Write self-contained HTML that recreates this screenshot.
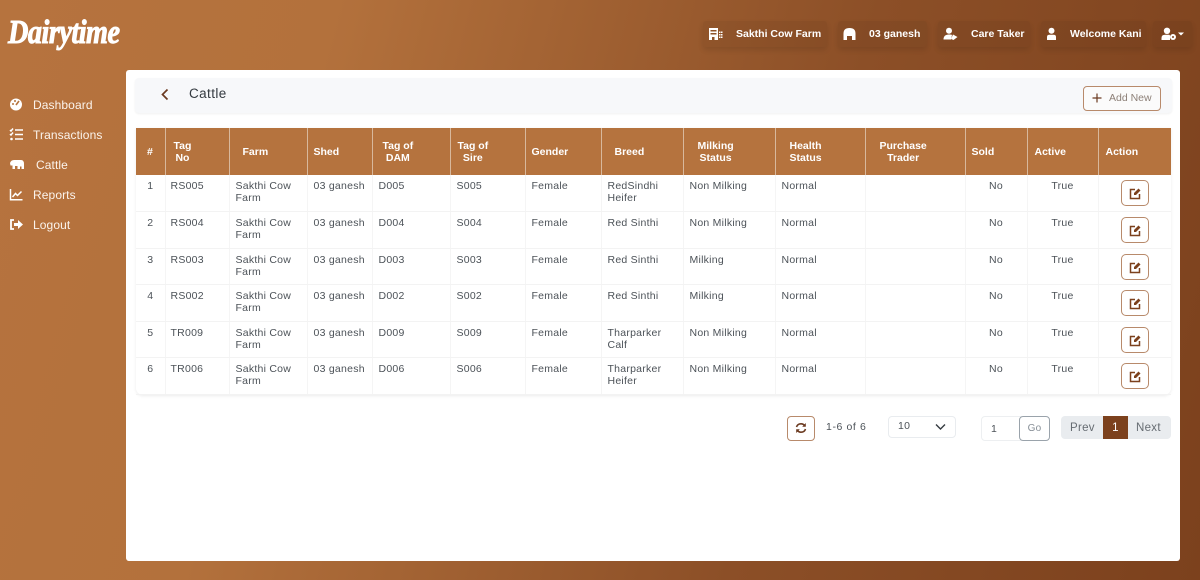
<!DOCTYPE html>
<html><head><meta charset="utf-8"><style>
*{box-sizing:border-box}
html,body{margin:0;padding:0}
body{width:1200px;height:580px;position:relative;overflow:hidden;font-family:"Liberation Sans",sans-serif;background:linear-gradient(105deg,#b6733e 0%,#b3713c 25%,#8c4f27 65%,#7c411d 100%);letter-spacing:.25px}
.abs,.nav,.top,.top-t{position:absolute}
.logo{position:absolute;left:8px;top:14px;font:italic bold 34px "Liberation Serif",serif;color:#fff;letter-spacing:-.6px;-webkit-text-stroke:1px #fff;transform:scaleX(.83);transform-origin:left center}
.nav{color:#fbf3ec;font-size:12px;line-height:16px;letter-spacing:.1px;left:33px;font-weight:400}
.nav-i{position:absolute;left:9px;width:15px;height:15px}
.top{top:21px;height:26px;background:#0000000d;box-shadow:0 3px 6px #0000001c;border-radius:3px}
.top-t{top:27px;color:#fff;font-size:10.5px;font-weight:bold;line-height:14px;letter-spacing:0;white-space:nowrap}
.top-i{position:absolute;top:27px;width:15px;height:14px}
.card{position:absolute;left:126px;top:70px;width:1054px;height:491px;background:#fff;border-radius:3px}
.head{position:absolute;left:135px;top:78px;width:1037px;height:35px;background:#f7f8fa;border-radius:4px;box-shadow:0 1px 2px #0000000f}
.title{position:absolute;left:189px;top:85px;font-size:13.5px;line-height:17px;color:#343a40;letter-spacing:.4px}
.add{position:absolute;left:1083px;top:86px;width:78px;height:25px;border:1px solid #b88a6b;border-radius:4px;background:#fbfbfb;color:#8d8078;font-size:10.5px;line-height:23px;padding-left:25px;letter-spacing:0;white-space:nowrap}
table{position:absolute;left:136px;top:128px;width:1035px;border-collapse:collapse;table-layout:fixed;font-size:10.5px;color:#4c5258;box-shadow:0 1px 3px #00000014;border-radius:0 0 7px 7px}
th{height:47px;background:#b5733e;color:#fff;font-weight:bold;text-align:left;padding:0;border-right:1.5px solid #d8b89c;line-height:12px;vertical-align:middle;font-size:10.5px;letter-spacing:0}
th:last-child,td:last-child{border-right:0}
th span{display:inline-block;text-align:center}
td{height:36.5px;padding:5px 0 0 6px;vertical-align:top;line-height:12px;border-right:1px solid #f5f5f5;border-bottom:1px solid #f3f3f3}
td.c{text-align:center;padding-left:0}
.ed{display:block;width:28px;height:26px;margin:0 0 0 16px;border:1px solid #b88a6b;border-radius:5px;position:relative;top:0;background:#fff}
.ed svg{position:absolute;left:7px;top:6px}
.pg{position:absolute;font-size:10.5px;color:#4c5258;line-height:14px}
</style></head><body>
<div class="logo">Dairytime</div>

<svg class="nav-i" style="top:97px" viewBox="0 0 15 15"><circle cx="7" cy="7.500" r="6" fill="#fff"/><path d="M7 8L10 4" stroke="#b5733e" stroke-width="1.600"/><circle cx="4" cy="7" r="1" fill="#b5733e"/><circle cx="6" cy="4" r="1" fill="#b5733e"/></svg>
<div class="nav" style="top:97px">Dashboard</div>
<svg class="nav-i" style="top:127px" viewBox="0 0 15 15"><path d="M6 3h8M6 7.500h8M6 12h8M1 3l1 1 2-2.500M1 7l1 1 2-2.500" stroke="#fff" stroke-width="1.500" fill="none"/><circle cx="2.500" cy="12" r="1.300" fill="#fff"/></svg>
<div class="nav" style="top:127px">Transactions</div>
<svg class="nav-i" style="top:157px;width:16px" viewBox="0 0 16 15"><path d="M1 6Q2 3 5 3H12Q15 3 15 7V12H12.500V9.500H11V12H8.500V9H6V12H3.500V8.500L1.500 8.500Z" fill="#fff"/></svg>
<div class="nav" style="top:157px;left:36px">Cattle</div>
<svg class="nav-i" style="top:187px" viewBox="0 0 15 15"><path d="M1.500 2V12.800H13.500" stroke="#fff" stroke-width="1.500" fill="none"/><path d="M3.500 10L6.500 6.500 8.500 8.500 12.500 4.500" stroke="#fff" stroke-width="1.500" fill="none"/></svg>
<div class="nav" style="top:187px">Reports</div>
<svg class="nav-i" style="top:217px" viewBox="0 0 15 15"><path d="M5 3H2V12H5" stroke="#fff" stroke-width="1.800" fill="none"/><path d="M5 6H9V3L14 7.500 9 12V9H5Z" fill="#fff"/></svg>
<div class="nav" style="top:217px">Logout</div>

<div class="top" style="left:703px;width:124px"></div>
<svg class="top-i" style="left:708px" viewBox="0 0 15 14"><path d="M1 1H10V13H6.500V10H4V13H1ZM2.500 3V4.500H8.500V3ZM2.500 6V7.500H8.500V6Z" fill="#fff" fill-rule="evenodd"/><path d="M11 4.500h1.500v1.500H11zM13 4.500h1.500v1.500H13zM11 7h1.500v1.500H11zM13 7h1.500v1.500H13zM11 9.500h1.500V11H11zM13 9.500h1.500V11H13z" fill="#fff"/></svg>
<div class="top-t" style="left:736px">Sakthi Cow Farm</div>
<div class="top" style="left:838px;width:89px"></div>
<svg class="top-i" style="left:842px" viewBox="0 0 15 14"><path d="M1.500 13V6.500Q1.500 1 7.500 1T13.500 6.500V13H10V9H5V13Z" fill="#fff"/></svg>
<div class="top-t" style="left:869px">03 ganesh</div>
<div class="top" style="left:938px;width:92px"></div>
<svg class="top-i" style="left:943px" viewBox="0 0 15 14"><circle cx="6" cy="3.800" r="3" fill="#fff"/><path d="M.5 12.500Q.5 7.500 6 7.500 8.500 7.500 9 8L8 12.500Z" fill="#fff"/><path d="M10 7.500L14.500 10 10.500 13 8 12Z" fill="#fff"/></svg>
<div class="top-t" style="left:971px">Care Taker</div>
<div class="top" style="left:1041px;width:105px"></div>
<svg class="top-i" style="left:1044px" viewBox="0 0 15 14"><circle cx="7.500" cy="3.800" r="3" fill="#fff"/><path d="M3 13V10Q3 7.800 5.500 7.800H9.500Q12 7.800 12 10V13Z" fill="#fff"/></svg>
<div class="top-t" style="left:1070px">Welcome Kani</div>
<div class="top" style="left:1153px;width:39px"></div>
<svg class="abs" style="left:1161px;top:27px" width="16" height="14" viewBox="0 0 16 14"><circle cx="6" cy="3.800" r="3.200" fill="#fff"/><path d="M.5 13V11Q.5 7.800 4 7.800H8Q9 7.800 9 9V13Z" fill="#fff"/><circle cx="12" cy="10" r="3" fill="#fff"/><circle cx="12" cy="10" r="1" fill="#7f441f"/></svg>
<svg class="abs" style="left:1178px;top:32px" width="6" height="4" viewBox="0 0 6 4"><path d="M0 .5H6L3 3.500Z" fill="#fff"/></svg>

<div class="card"></div>
<div class="head"></div>
<svg class="abs" style="left:160px;top:88px" width="10" height="13" viewBox="0 0 10 13"><path d="M7.500 1.500L2.500 6.500 7.500 11.500" stroke="#6b3a20" stroke-width="1.700" fill="none"/></svg>
<div class="title">Cattle</div>
<div class="add">Add New</div>
<svg class="abs" style="left:1092px;top:93px" width="10" height="10" viewBox="0 0 10 10"><path d="M5 .5V9.500M.5 5H9.500" stroke="#6b3a20" stroke-width="1.200"/></svg>

<table>
<colgroup><col style="width:29px"><col style="width:64px"><col style="width:78px"><col style="width:65px"><col style="width:78px"><col style="width:75px"><col style="width:76px"><col style="width:82px"><col style="width:92px"><col style="width:90px"><col style="width:100px"><col style="width:62px"><col style="width:71px"><col style="width:73px"></colgroup>
<tr><th style="padding-left:11px">#</th><th style="padding-left:8px"><span>Tag<br>No</span></th><th style="padding-left:13px">Farm</th><th style="padding-left:6px">Shed</th><th style="padding-left:10px"><span>Tag of<br>DAM</span></th><th style="padding-left:7px"><span>Tag of<br>Sire</span></th><th style="padding-left:6px">Gender</th><th style="padding-left:13px">Breed</th><th style="padding-left:14px"><span>Milking<br>Status</span></th><th style="padding-left:14px"><span>Health<br>Status</span></th><th style="padding-left:14px"><span>Purchase<br>Trader</span></th><th style="padding-left:6px">Sold</th><th style="padding-left:7px">Active</th><th style="padding-left:7px">Action</th></tr>
<tr><td class="c">1</td><td style="padding-left:5px">RS005</td><td>Sakthi Cow<br>Farm</td><td>03 ganesh</td><td>D005</td><td>S005</td><td>Female</td><td>RedSindhi<br>Heifer</td><td>Non Milking</td><td>Normal</td><td></td><td class="c">No</td><td class="c">True</td><td><span class="ed"><svg width="13" height="13" viewBox="0 0 13 13"><path d="M6 2.500H1.500V11.500H10.500V7" stroke="#7c411d" stroke-width="1.500" fill="none"/><path d="M5 6L9.500 1.500 11.500 3.500 7 8H5Z" fill="#7c411d"/></svg></span></td></tr>
<tr><td class="c">2</td><td style="padding-left:5px">RS004</td><td>Sakthi Cow<br>Farm</td><td>03 ganesh</td><td>D004</td><td>S004</td><td>Female</td><td>Red Sinthi</td><td>Non Milking</td><td>Normal</td><td></td><td class="c">No</td><td class="c">True</td><td><span class="ed"><svg width="13" height="13" viewBox="0 0 13 13"><path d="M6 2.500H1.500V11.500H10.500V7" stroke="#7c411d" stroke-width="1.500" fill="none"/><path d="M5 6L9.500 1.500 11.500 3.500 7 8H5Z" fill="#7c411d"/></svg></span></td></tr>
<tr><td class="c">3</td><td style="padding-left:5px">RS003</td><td>Sakthi Cow<br>Farm</td><td>03 ganesh</td><td>D003</td><td>S003</td><td>Female</td><td>Red Sinthi</td><td>Milking</td><td>Normal</td><td></td><td class="c">No</td><td class="c">True</td><td><span class="ed"><svg width="13" height="13" viewBox="0 0 13 13"><path d="M6 2.500H1.500V11.500H10.500V7" stroke="#7c411d" stroke-width="1.500" fill="none"/><path d="M5 6L9.500 1.500 11.500 3.500 7 8H5Z" fill="#7c411d"/></svg></span></td></tr>
<tr><td class="c">4</td><td style="padding-left:5px">RS002</td><td>Sakthi Cow<br>Farm</td><td>03 ganesh</td><td>D002</td><td>S002</td><td>Female</td><td>Red Sinthi</td><td>Milking</td><td>Normal</td><td></td><td class="c">No</td><td class="c">True</td><td><span class="ed"><svg width="13" height="13" viewBox="0 0 13 13"><path d="M6 2.500H1.500V11.500H10.500V7" stroke="#7c411d" stroke-width="1.500" fill="none"/><path d="M5 6L9.500 1.500 11.500 3.500 7 8H5Z" fill="#7c411d"/></svg></span></td></tr>
<tr><td class="c">5</td><td style="padding-left:5px">TR009</td><td>Sakthi Cow<br>Farm</td><td>03 ganesh</td><td>D009</td><td>S009</td><td>Female</td><td>Tharparker<br>Calf</td><td>Non Milking</td><td>Normal</td><td></td><td class="c">No</td><td class="c">True</td><td><span class="ed"><svg width="13" height="13" viewBox="0 0 13 13"><path d="M6 2.500H1.500V11.500H10.500V7" stroke="#7c411d" stroke-width="1.500" fill="none"/><path d="M5 6L9.500 1.500 11.500 3.500 7 8H5Z" fill="#7c411d"/></svg></span></td></tr>
<tr><td class="c">6</td><td style="padding-left:5px">TR006</td><td>Sakthi Cow<br>Farm</td><td>03 ganesh</td><td>D006</td><td>S006</td><td>Female</td><td>Tharparker<br>Heifer</td><td>Non Milking</td><td>Normal</td><td></td><td class="c">No</td><td class="c">True</td><td><span class="ed"><svg width="13" height="13" viewBox="0 0 13 13"><path d="M6 2.500H1.500V11.500H10.500V7" stroke="#7c411d" stroke-width="1.500" fill="none"/><path d="M5 6L9.500 1.500 11.500 3.500 7 8H5Z" fill="#7c411d"/></svg></span></td></tr>
</table>

<div class="abs" style="left:787px;top:416px;width:28px;height:25px;border:1px solid #b88a6b;border-radius:4px"></div>
<svg class="abs" style="left:795px;top:422px" width="12" height="12" viewBox="0 0 12 12"><path d="M1.500 5Q2.500 1.800 6 1.800 8.500 1.800 10 4M10.500 7Q9.500 10.200 6 10.200 3.500 10.200 2 8" stroke="#6b3a20" stroke-width="1.600" fill="none"/><path d="M10.800 1V4.800H7.200ZM1.200 11V7.200H4.800Z" fill="#6b3a20"/></svg>
<div class="pg" style="left:826px;top:420px;letter-spacing:.6px">1-6 of 6</div>
<div class="abs" style="left:888px;top:416px;width:68px;height:22px;border:1px solid #e9ecef;border-radius:4px"></div>
<div class="pg" style="left:898px;top:419px">10</div>
<svg class="abs" style="left:935px;top:423px" width="11" height="8" viewBox="0 0 11 8"><path d="M1 1.500L5.500 6 10 1.500" stroke="#343a40" stroke-width="1.400" fill="none"/></svg>
<div class="abs" style="left:981px;top:416px;width:40px;height:25px;border:1px solid #edeff1;border-radius:4px 0 0 4px"></div>
<div class="pg" style="left:991px;top:422px">1</div>
<div class="abs" style="left:1019px;top:416px;width:31px;height:25px;border:1px solid #9aa3ab;border-radius:4px;background:#fff;color:#868e96;font-size:10px;line-height:24px;text-align:center">Go</div>
<div class="abs" style="left:1061px;top:416px;width:110px;height:23px;background:#e9ecef;border-radius:4px"></div>
<div class="pg" style="left:1070px;top:421px;font-size:11.5px;color:#666c72;letter-spacing:.3px">Prev</div>
<div class="abs" style="left:1103px;top:416px;width:25px;height:23px;background:#7c411d;color:#fff;font-size:11.5px;line-height:24px;text-align:center">1</div>
<div class="pg" style="left:1136px;top:421px;font-size:11.5px;color:#666c72;letter-spacing:.3px">Next</div>
</body></html>
